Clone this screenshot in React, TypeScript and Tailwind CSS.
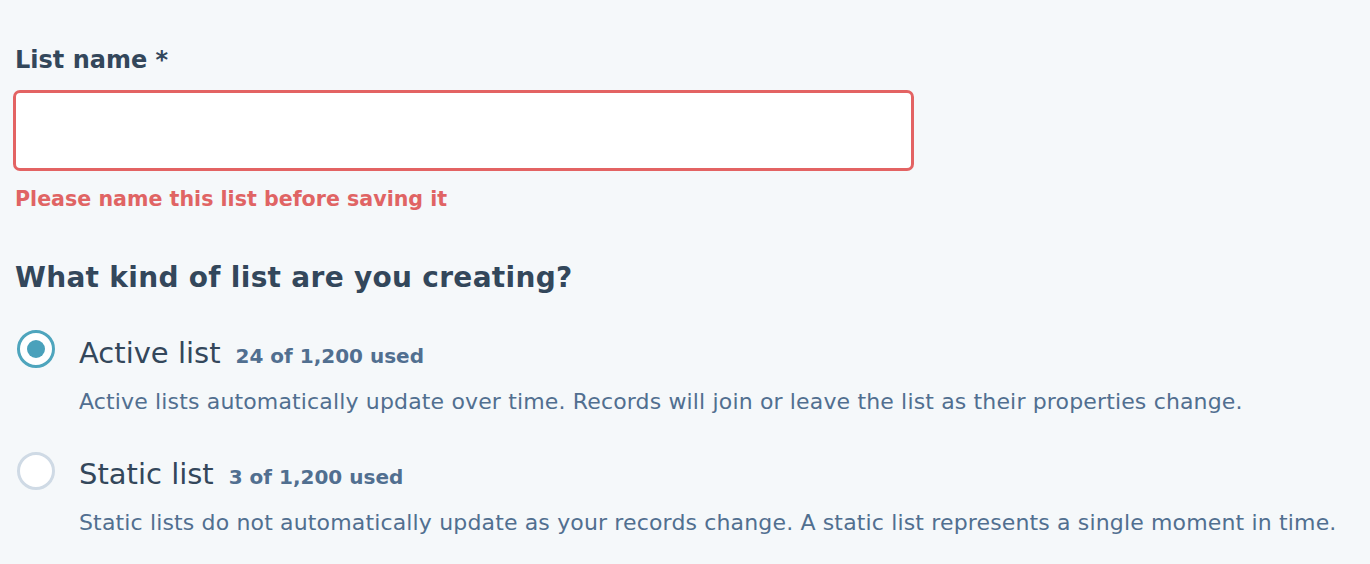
import React from "react";

function Radio({ checked }: { checked: boolean }) {
  return checked ? (
    <div className="w-[38px] h-[38px] rounded-full border-[3px] border-[#4ea5bd] bg-white flex items-center justify-center shrink-0">
      <div className="w-[18px] h-[18px] rounded-full bg-[#4aa1bb]" />
    </div>
  ) : (
    <div className="w-[38px] h-[38px] rounded-full border-[3px] border-[#cfdae5] bg-white shrink-0" />
  );
}

function Option({
  checked,
  title,
  usage,
  desc,
  className,
  radioOffset,
}: {
  checked: boolean;
  title: string;
  usage: string;
  desc: string;
  className?: string;
  radioOffset: string;
}) {
  return (
    <div className={"flex " + (className ?? "")}>
      <div className={"w-[66px] pl-[4px] " + radioOffset}>
        <Radio checked={checked} />
      </div>
      <div className="flex flex-col">
        <div className="flex items-baseline gap-[15px]">
          <span className="text-[29px] leading-[38px] text-[#33475b] font-normal">{title}</span>
          <span className="text-[20px] leading-[38px] font-bold text-[#516f90]">{usage}</span>
        </div>
        <p className="mt-[13px] text-[22px] leading-[28px] tracking-[0.15px] text-[#516f90] whitespace-nowrap">
          {desc}
        </p>
      </div>
    </div>
  );
}

export default function App() {
  return (
    <div
      className="w-[1370px] h-[564px] bg-[#f5f8fa] pl-[13px] pt-[44px] overflow-hidden"
      style={{ fontFamily: "'DejaVu Sans', 'Noto Sans', sans-serif" }}
    >
      <div className="pl-[2px] text-[24px] leading-[32px] font-bold text-[#33475b]">List name *</div>
      <input
        className="mt-[14px] block w-[901px] h-[81px] rounded-[7px] border-[3px] border-[#e36363] bg-white outline-none"
        type="text"
        aria-label="List name"
      />
      <div className="mt-[14px] pl-[2px] text-[20.6px] leading-[28px] font-bold text-[#e06464]">
        Please name this list before saving it
      </div>
      <h2 className="mt-[48px] pl-[2px] text-[28px] leading-[34px] tracking-[0.3px] font-bold text-[#33475b]">
        What kind of list are you creating?
      </h2>
      <Option
        className="mt-[39px]"
        checked={true}
        radioOffset="-mt-[4px]"
        title="Active list"
        usage="24 of 1,200 used"
        desc="Active lists automatically update over time. Records will join or leave the list as their properties change."
      />
      <Option
        className="mt-[39px]"
        checked={false}
        radioOffset="-mt-[3px]"
        title="Static list"
        usage="3 of 1,200 used"
        desc="Static lists do not automatically update as your records change. A static list represents a single moment in time."
      />
    </div>
  );
}
